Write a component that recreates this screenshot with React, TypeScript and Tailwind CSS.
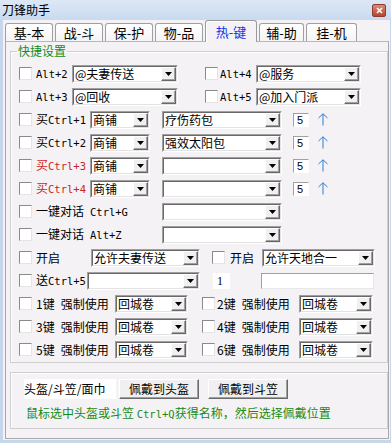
import React from "react";

const mono = "font-['DejaVu_Sans_Mono','Noto_Sans_CJK_SC',monospace] text-[10.5px]";

function Check() {
  return (
    <span className="block w-[13px] h-[13px] shrink-0 bg-white border border-t-[#8a8a8a] border-l-[#8a8a8a] border-r-[#e4e4e4] border-b-[#e4e4e4]" />
  );
}

function DropBtn() {
  return (
    <span className="w-[15px] h-full shrink-0 flex items-center justify-center bg-[#f0f0f0] border border-t-white border-l-white border-r-[#696969] border-b-[#696969] shadow-[inset_-1px_-1px_0_#a0a0a0]">
      <svg width="7" height="4" viewBox="0 0 7 4">
        <path d="M0 0h7L3.5 4z" fill="#000" />
      </svg>
    </span>
  );
}

function Combo({ w, text = "" }: { w: string; text?: string }) {
  return (
    <div className={`${w} h-[18px] shrink-0 flex bg-white border border-t-[#a0a0a0] border-l-[#a0a0a0] border-r-white border-b-white`}>
      <div className="flex-1 min-w-0 flex items-center border border-t-[#696969] border-l-[#696969] border-r-[#e3e3e3] border-b-[#e3e3e3]">
        <span className="flex-1 min-w-0 pl-[1px] text-[12px] leading-[14px] whitespace-nowrap text-black">
          {text}
        </span>
        <DropBtn />
      </div>
    </div>
  );
}

function NumBox({ v }: { v: string }) {
  return (
    <span className="w-[16px] h-[14px] shrink-0 bg-white border border-t-[#a0a0a0] border-l-[#a0a0a0] border-r-white border-b-white pl-[3px] text-[11px] leading-[12px] font-['Liberation_Sans',sans-serif]">
      {v}
    </span>
  );
}

function Up() {
  return (
    <svg width="10" height="13" viewBox="0 0 10 13" className="shrink-0">
      <path d="M0.5 5L5 0.8L9.5 5M5 0.8V12.5" stroke="#2b7ed6" strokeWidth="1" fill="none" />
    </svg>
  );
}

function Row({ children }: { children: React.ReactNode }) {
  return <div className="flex items-center h-[23px] pl-[8px] whitespace-nowrap">{children}</div>;
}

function Tab({ label, w, active }: { label: string; w: string; active?: boolean }) {
  if (active)
    return (
      <div className={`${w} h-[22px] -mb-[1px] relative z-10 flex items-center justify-center bg-[#f5f2f5] border border-b-0 border-[#9a9a9a] rounded-t-[3px] shadow-[inset_1px_1px_0_#fff] text-[13px] text-[#1436e6]`}>
        {label}
      </div>
    );
  return (
    <div className={`${w} h-[18px] flex items-center justify-center bg-gradient-to-b from-white to-[#f4f4f4] border border-b-0 border-[#a0a0a0] rounded-t-[3px] text-[13px] text-black`}>
      {label}
    </div>
  );
}

function BuyRow({ n, item, red }: { n: string; item: string; red?: boolean }) {
  return (
    <Row>
      <Check />
      <span className={`ml-[4px] w-[54px] shrink-0 text-[12px] ${red ? "text-[#cc1f1f]" : "text-black"}`}>
        买<span className={mono}>Ctrl+{n}</span>
      </span>
      <Combo w="w-[60px]" text="商铺" />
      <span className="ml-[12px]" />
      <Combo w="w-[120px]" text={item} />
      <span className="ml-[11px]" />
      <NumBox v="5" />
      <span className="ml-[9px]" />
      <Up />
    </Row>
  );
}

function ForceRow({ a, b }: { a: string; b: string }) {
  return (
    <Row>
      <Check />
      <span className="ml-[4px] w-[79px] shrink-0 text-[12px]">
        {a}键<span className="ml-[6px]">强制使用</span>
      </span>
      <Combo w="w-[73px]" text="回城卷" />
      <span className="ml-[14px]" />
      <Check />
      <span className="ml-[2px] w-[82px] shrink-0 text-[12px]">
        {b}键<span className="ml-[6px]">强制使用</span>
      </span>
      <Combo w="w-[74px]" text="回城卷" />
    </Row>
  );
}

export default function App() {
  return (
    <div className="w-[391px] h-[443px] overflow-hidden flex flex-col bg-[#c6d7ed] text-black font-['Noto_Sans_CJK_SC',sans-serif] leading-[14px]">
      {/* title bar */}
      <div className="h-[20px] shrink-0 flex items-center justify-between pl-[2px] pr-[5px] bg-gradient-to-b from-[#dde8f6] to-[#c9daef]">
        <span className="text-[12px]">刀锋助手</span>
        <span className="w-[14px] h-[13px] flex items-center justify-center rounded-[2px] border border-[#8e3b30] bg-gradient-to-b from-[#d98a78] to-[#b9442f]">
          <svg width="7" height="7" viewBox="0 0 7 7">
            <path d="M1 1L6 6M6 1L1 6" stroke="#fff" strokeWidth="1.6" />
          </svg>
        </span>
      </div>

      <div className="flex-1 ml-[3px] mr-[1px] mb-[3px] pb-[1px] bg-[#f5f2f5] flex flex-col">
        {/* tabs */}
        <div className="h-[21px] shrink-0 flex items-end gap-[2px] pl-[2px]">
          <Tab label="基-本" w="w-[48px]" />
          <Tab label="战-斗" w="w-[48px]" />
          <Tab label="保-护" w="w-[48px]" />
          <Tab label="物-品" w="w-[48px]" />
          <Tab label="热-键" w="w-[52px]" active />
          <Tab label="辅-助" w="w-[45px]" />
          <Tab label="挂-机" w="w-[51px]" />
        </div>

        {/* pane */}
        <div className="flex-1 ml-[2px] mr-[1px] border border-[#a8a8a8] border-t-[#b8b8b8] pt-[2px] pl-[4px] flex flex-col">
          <fieldset className="w-[378px] border border-[#cfcfcf] shadow-[inset_1px_1px_0_#fff] pt-[4px] pb-[1px]">
            <legend className="ml-[6px] px-[1px] text-[12px] leading-[14px] text-[#178a17]">快捷设置</legend>

            <Row>
              <Check />
              <span className={`${mono} ml-[4px] w-[36px] shrink-0`}>Alt+2</span>
              <Combo w="w-[106px]" text="@夫妻传送" />
              <span className="ml-[27px]" />
              <Check />
              <span className={`${mono} ml-[2px] w-[36px] shrink-0`}>Alt+4</span>
              <Combo w="w-[105px]" text="@服务" />
            </Row>
            <Row>
              <Check />
              <span className={`${mono} ml-[4px] w-[36px] shrink-0`}>Alt+3</span>
              <Combo w="w-[106px]" text="@回收" />
              <span className="ml-[27px]" />
              <Check />
              <span className={`${mono} ml-[2px] w-[36px] shrink-0`}>Alt+5</span>
              <Combo w="w-[105px]" text="@加入门派" />
            </Row>

            <BuyRow n="1" item="疗伤药包" />
            <BuyRow n="2" item="强效太阳包" />
            <BuyRow n="3" item="" red />
            <BuyRow n="4" item="" red />

            <Row>
              <Check />
              <span className="ml-[4px] w-[126px] shrink-0 text-[12px]">
                一键对话<span className={`${mono} ml-[6px]`}>Ctrl+G</span>
              </span>
              <Combo w="w-[120px]" />
            </Row>
            <Row>
              <Check />
              <span className="ml-[4px] w-[126px] shrink-0 text-[12px]">
                一键对话<span className={`${mono} ml-[6px]`}>Alt+Z</span>
              </span>
              <Combo w="w-[120px]" />
            </Row>

            <Row>
              <Check />
              <span className="ml-[4px] w-[55px] shrink-0 text-[12px]">开启</span>
              <Combo w="w-[109px]" text="允许夫妻传送" />
              <span className="ml-[12px]" />
              <Check />
              <span className="ml-[5px] w-[32px] shrink-0 text-[12px]">开启</span>
              <Combo w="w-[113px]" text="允许天地合一" />
            </Row>

            <Row>
              <Check />
              <span className="ml-[4px] w-[51px] shrink-0 text-[12px]">
                送<span className={mono}>Ctrl+5</span>
              </span>
              <Combo w="w-[113px]" />
              <span className="ml-[13px] w-[17px] h-[16px] shrink-0 bg-white pl-[4px] text-[12px] leading-[16px] font-['Liberation_Serif',serif]">
                1
              </span>
              <span className="ml-[31px] w-[113px] h-[16px] shrink-0 bg-white border border-t-[#a0a0a0] border-l-[#a0a0a0] border-r-[#e8e8e8] border-b-[#e8e8e8]" />
            </Row>

            <ForceRow a="1" b="2" />
            <ForceRow a="3" b="4" />
            <ForceRow a="5" b="6" />
          </fieldset>

          <fieldset className="mt-[9px] w-[378px] border border-[#cfcfcf] shadow-[inset_1px_1px_0_#fff] pt-[6px] pb-[7px]">
            <div className="flex items-center pl-[13px]">
              <span className="w-[92px] h-[20px] shrink-0 flex items-center bg-white text-[12px] leading-[14px] whitespace-nowrap">
                头盔/斗笠/面巾
              </span>
              <button className="ml-[3px] w-[80px] h-[20px] shrink-0 bg-[#f0f0f0] border border-t-white border-l-white border-r-[#696969] border-b-[#696969] shadow-[inset_-1px_-1px_0_#a0a0a0] text-[12px] leading-[14px]">
                佩戴到头盔
              </button>
              <button className="ml-[9px] w-[80px] h-[20px] shrink-0 bg-[#f0f0f0] border border-t-white border-l-white border-r-[#696969] border-b-[#696969] shadow-[inset_-1px_-1px_0_#a0a0a0] text-[12px] leading-[14px]">
                佩戴到斗笠
              </button>
            </div>
            <div className="mt-[7px] pl-[15px] text-[12px] leading-[14px] text-[#178a17] whitespace-nowrap">
              鼠标选中头盔或斗笠 <span className={mono}>Ctrl+Q</span>获得名称，然后选择佩戴位置
            </div>
          </fieldset>
        </div>
      </div>
    </div>
  );
}
